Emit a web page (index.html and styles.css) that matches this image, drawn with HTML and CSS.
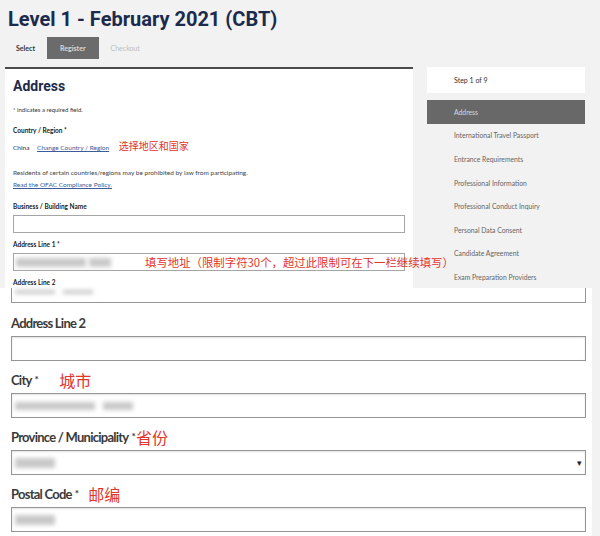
FILE: index.html
```html
<!DOCTYPE html>
<html lang="en">
<head>
  <meta charset="UTF-8" />
  <title>Level 1 - February 2021 (CBT) - Address</title>
  <link rel="stylesheet" href="styles.css">
</head>
<body>

<div class="shot-top">
  <h1 class="title">Level 1 - February 2021 (CBT)</h1>

  <div class="tabs">
    <span class="tab">Select</span>
    <span class="tab active">Register</span>
    <span class="tab muted">Checkout</span>
  </div>

  <div class="layout">
    <div class="form-panel">
      <h2>Address</h2>
      <p class="note">* indicates a required field.</p>

      <div class="small-label first">Country / Region *</div>
      <p class="country">
        China <a href="#">Change Country / Region</a>
        <span class="anno">选择地区和国家</span>
      </p>

      <p class="residents">
        Residents of certain countries/regions may be prohibited by law from participating.<br>
        <a href="#">Read the OFAC Compliance Policy.</a>
      </p>

      <div class="small-label">Business / Building Name</div>
      <div class="small-input"></div>

      <div class="small-label">Address Line 1 *</div>
      <div class="small-input">
        <span class="blur b1"></span><span class="blur b2"></span>
        <span class="anno anno-long">填写地址（限制字符30个，超过此限制可在下一栏继续填写）</span>
      </div>

      <div class="small-label">Address Line 2</div>
      <div class="small-input"></div>
    </div>

    <div class="steps">
      <div class="step-count">Step 1 of 9</div>
      <div class="step current">Address</div>
      <div class="step">International Travel Passport</div>
      <div class="step">Entrance Requirements</div>
      <div class="step">Professional Information</div>
      <div class="step">Professional Conduct Inquiry</div>
      <div class="step">Personal Data Consent</div>
      <div class="step">Candidate Agreement</div>
      <div class="step">Exam Preparation Providers</div>
    </div>
  </div>
</div>

<div class="shot-zoom">
  <div class="input cut">
    <span class="blur z1"></span><span class="blur z2"></span>
  </div>

  <div class="label">Address Line 2</div>
  <div class="input"></div>

  <div class="label">City <span class="req">*</span> <span class="anno big city">城市</span></div>
  <div class="input">
    <span class="blur c1"></span><span class="blur c2"></span>
  </div>

  <div class="label">Province / Municipality <span class="req">*</span><span class="anno big province">省份</span></div>
  <div class="input select">
    <span class="blur p1"></span>
    <span class="arrow">▾</span>
  </div>

  <div class="label">Postal Code <span class="req">*</span> <span class="anno big postal">邮编</span></div>
  <div class="input">
    <span class="blur p1"></span>
  </div>
</div>

</body>
</html>
```

FILE: styles.css
```css
body {
  margin: 0;
  background: #f2f2f2;
  font-family: Lato, "Liberation Sans", "Noto Sans CJK SC", sans-serif;
  color: #333;
}

a {
  color: #3b5c99;
}

/* ---- top (small) screenshot ---- */

.shot-top {
  height: 288px;
  overflow: hidden;
  padding: 0 5px;
}

.title {
  margin: 0 0 0 3px;
  padding-top: 6px;
  font-family: Roboto, "Liberation Sans", sans-serif;
  font-size: 20px;
  line-height: 26px;
  font-weight: 700;
  color: #1c2b4d;
}

.tabs {
  display: flex;
  margin-top: 5px;
  height: 22px;
}

.tab {
  display: flex;
  align-items: center;
  padding: 0 11px;
  font-size: 7px;
  font-weight: 700;
  color: #333;
}

.tab.active {
  background: #6b6b6b;
  color: #d8d8d8;
  margin-left: 1px;
  padding: 0 13px;
}

.tab.muted {
  color: #bdbdbd;
  font-weight: 400;
  padding-left: 12px;
}

.layout {
  display: flex;
  align-items: flex-start;
  margin-top: 8px;
}

.form-panel {
  position: relative;
  width: 392px;
  background: #fff;
  border-top: 2px solid #4a4a4a;
  padding: 7px 8px 20px;
}

.form-panel h2 {
  margin: 0;
  font-family: Roboto, "Liberation Sans", sans-serif;
  font-size: 14px;
  line-height: 20px;
  font-weight: 700;
  color: #1c2b4d;
}

.note {
  margin: 9px 0 0;
  font-size: 6px;
  line-height: 10px;
}

.small-label {
  margin-top: 11px;
  font-size: 6.5px;
  line-height: 10px;
  font-weight: 700;
  color: #222;
}

.country {
  margin: 5px 0 0;
  font-size: 6.5px;
  line-height: 10px;
}

.country a {
  margin-left: 6px;
}

.anno {
  color: #e2352c;
  font-family: "Noto Sans CJK SC", sans-serif;
}

.country .anno {
  font-size: 10px;
  margin-left: 8px;
}

.residents {
  margin: 14px 0 0;
  font-size: 6.5px;
  line-height: 12px;
  color: #444;
}

.small-input {
  position: relative;
  height: 16px;
  margin-top: 3px;
  border: 1px solid #a5a5a5;
  display: flex;
  align-items: center;
  gap: 3px;
  padding-left: 2px;
}

.small-input + .small-label {
  margin-top: 7px;
}

.anno-long {
  position: absolute;
  left: 131px;
  top: 0;
  z-index: 2;
  white-space: nowrap;
  font-size: 11.4px;
  line-height: 16px;
}

.blur {
  display: block;
  height: 9px;
  background: #c9c9c9;
  filter: blur(2px);
}

.b1 { width: 70px; }
.b2 { width: 22px; }

.steps {
  width: 158px;
  margin-left: 14px;
}

.step-count {
  height: 26px;
  background: #fff;
  display: flex;
  align-items: center;
  padding-left: 27px;
  font-size: 7px;
  color: #333;
}

.step {
  height: 23.6px;
  display: flex;
  align-items: center;
  padding-left: 27px;
  font-size: 6.8px;
  color: #666;
}

.step.current {
  margin-top: 7px;
  background: #686868;
  color: #d9d9d9;
}

/* ---- bottom (enlarged) screenshot ---- */

.shot-zoom {
  width: 575px;
  background: #fff;
  padding: 0 6px 4px 11px;
}

.input {
  height: 23px;
  margin-top: 2px;
  border: 1px solid #959595;
  box-shadow: inset 0 1px 2px rgba(0, 0, 0, 0.12);
  display: flex;
  align-items: center;
  gap: 8px;
  padding-left: 3px;
  background: #fff;
}

.input.cut {
  height: 14px;
  margin-top: 0;
  border-top: none;
  box-shadow: none;
  align-items: flex-start;
}

.input + .label {
  margin-top: 8px;
}

.input.cut + .label {
  margin-top: 9px;
}

.label {
  height: 22px;
  display: flex;
  align-items: center;
  font-size: 13px;
  font-weight: 700;
  letter-spacing: -0.75px;
  color: #3a3a3a;
}

.req {
  font-size: 10px;
  margin-left: 3px;
  align-self: flex-start;
  margin-top: 4px;
}

.anno.big {
  font-size: 16px;
  font-weight: 400;
  letter-spacing: 0;
}

.anno.city { margin-left: 21px; }
.anno.province { margin-left: 1px; }
.anno.postal { margin-left: 10px; }

.z1 { width: 40px; height: 4px; margin-top: 2px; }
.z2 { width: 30px; height: 4px; margin-top: 2px; }
.c1 { width: 80px; height: 8px; }
.c2 { width: 30px; height: 8px; }
.p1 { width: 40px; height: 10px; }

.select {
  justify-content: space-between;
}

.arrow {
  font-size: 9px;
  color: #222;
  padding-right: 3px;
}
```
